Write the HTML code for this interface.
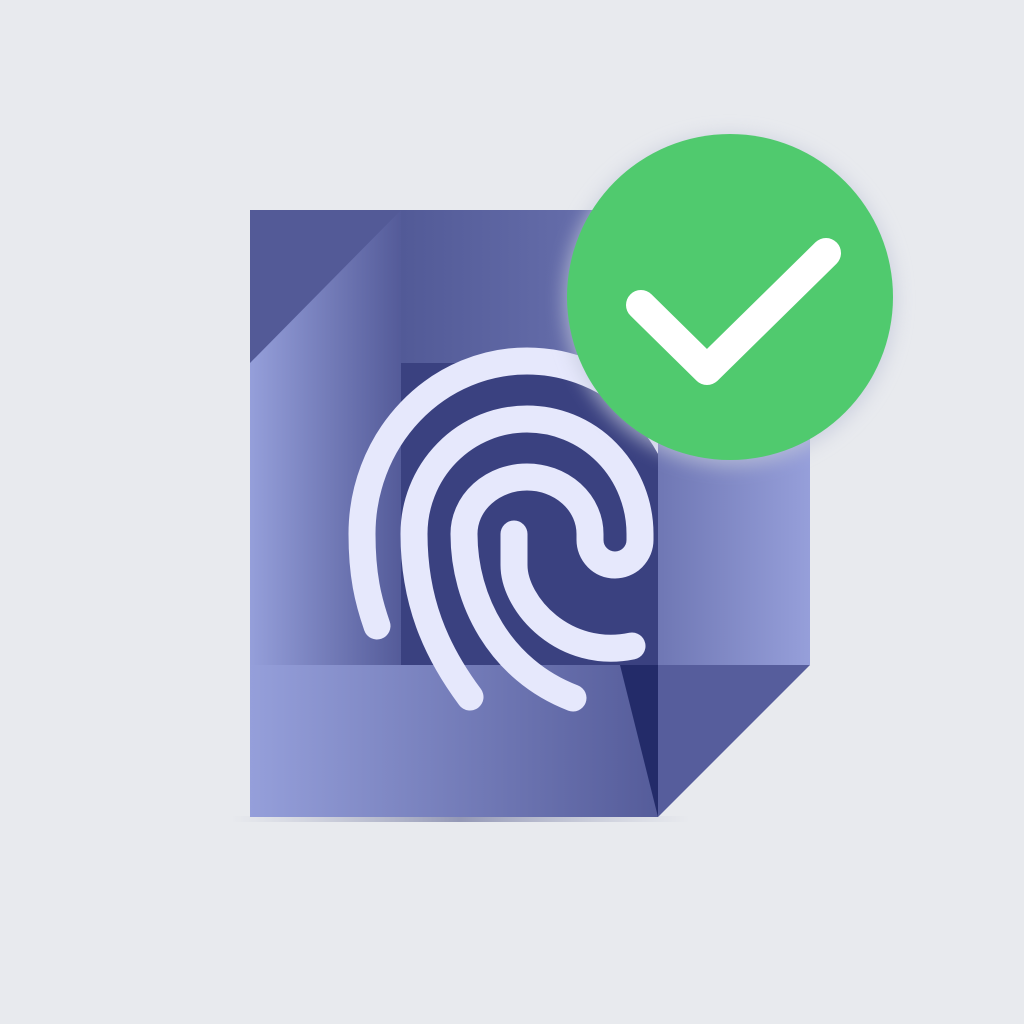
<!DOCTYPE html>
<html><head><meta charset="utf-8"><style>
html,body{margin:0;padding:0;background:#e8eaee;}
svg{display:block}
</style></head><body>
<svg width="1024" height="1024" viewBox="0 0 1024 1024" xmlns="http://www.w3.org/2000/svg">
<defs>
<linearGradient id="lc" x1="250" y1="0" x2="401" y2="0" gradientUnits="userSpaceOnUse">
<stop offset="0" stop-color="#959fda"/><stop offset="1" stop-color="#545b99"/></linearGradient>
<linearGradient id="rc" x1="401" y1="0" x2="810" y2="0" gradientUnits="userSpaceOnUse">
<stop offset="0" stop-color="#525a97"/><stop offset="0.6" stop-color="#6c74b1"/><stop offset="1" stop-color="#969fda"/></linearGradient>
<linearGradient id="bc" x1="250" y1="0" x2="658" y2="0" gradientUnits="userSpaceOnUse">
<stop offset="0" stop-color="#959fda"/><stop offset="1" stop-color="#555c9a"/></linearGradient>
<linearGradient id="bs" x1="0" y1="0" x2="1" y2="0">
<stop offset="0" stop-color="#8b90b0" stop-opacity="0"/><stop offset="0.5" stop-color="#5b6190" stop-opacity="0.6"/><stop offset="1" stop-color="#8b90b0" stop-opacity="0"/></linearGradient>
<filter id="blur" x="-30%" y="-30%" width="160%" height="160%"><feGaussianBlur stdDeviation="9"/></filter>
<clipPath id="fc"><rect x="300" y="300" width="358" height="500"/></clipPath>
</defs>
<rect x="230" y="816" width="460" height="6" fill="url(#bs)"/>
<rect x="250" y="210" width="151" height="455" fill="url(#lc)"/>
<polygon points="250,210 401,210 250,363" fill="#535a97"/>
<rect x="401" y="210" width="409" height="455" fill="url(#rc)"/>
<rect x="401" y="363" width="257" height="302" fill="#3a4180"/>
<rect x="250" y="665" width="408" height="152" fill="url(#bc)"/>
<polygon points="620,665 658,665 658,817" fill="#232b69"/>
<polygon points="658,665 810,665 658,817" fill="#565d9c"/>
<g clip-path="url(#fc)" fill="none" stroke="#e6e8fc" stroke-width="27" stroke-linecap="round" stroke-linejoin="round">
<path d="M377,626 C368,600 362,575 362,534 A165,173 0 0 1 692,534 L692,560"/>
<path d="M470,697 C435,650 414,600 414,534 A113,115 0 0 1 640,534 L640,540 A25,25 0 0 1 590,540 L590,534 A63,57 0 0 0 464,534 C464,600 500,670 573,698"/>
<path d="M514,534 L514,565 C514,605 565,660 632,646"/>
</g>
<circle cx="730" cy="300" r="166" fill="#c3c8da" opacity="0.7" filter="url(#blur)"/>
<circle cx="730" cy="297" r="163" fill="#50ca6e"/>
<path d="M641,305 L707,370 L826,253" fill="none" stroke="#fff" stroke-width="30" stroke-linecap="round" stroke-linejoin="round"/>
</svg>
</body></html>
